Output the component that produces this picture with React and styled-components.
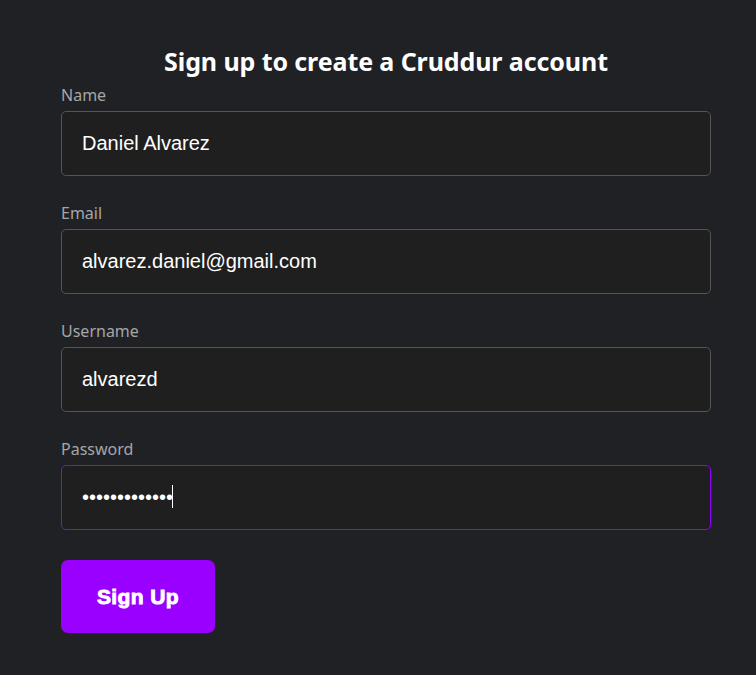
import styled, { createGlobalStyle } from "styled-components"

const GlobalStyle = createGlobalStyle`
    html, body {
        margin: 0;
        background-color: #202124;
    }
`;
const Page = styled.div`
    width: 756px;
    height: 675px;
    background-color: #202124;
    display: flex;
    padding: 44px 45px 0 61px;
    box-sizing: border-box;
`;
const Form = styled.form`
    width: 650px;
    display: flex;
    flex-direction: column;
`;
const Title = styled.h1`
    margin: 0 0 6px;
    font-family: "Noto Sans", "Open Sans", sans-serif;
    font-size: 25px;
    line-height: 34px;
    font-weight: 700;
    color: #fff;
    text-align: center;
    letter-spacing: -0.1px;
`;
const Field = styled.div`
    display: flex;
    flex-direction: column;
    gap: 5px;
    margin-bottom: 26px;
`;
const Label = styled.label`
    font-family: "Noto Sans", "Open Sans", sans-serif;
    font-size: 16px;
    line-height: 22px;
    color: #a4a6a8;
`;
const InputWrap = styled.div`
    position: relative;
    display: flex;
`;
const Input = styled.input`
    flex: 1;
    height: 65px;
    box-sizing: border-box;
    padding: 0 20px;
    background-color: #1f1f1f;
    border: 1px solid ${(p) => (p.$active ? "#9000ff" : "#545454")};
    border-radius: 5px;
    color: #fff;
    font-family: "Liberation Sans", Arial, sans-serif;
    font-size: 20px;
    outline: none;
`;
const Caret = styled.span`
    position: absolute;
    left: 111px;
    top: 20px;
    width: 1px;
    height: 23px;
    background-color: #fff;
    pointer-events: none;
`;
const Button = styled.button`
    width: 154px;
    height: 73px;
    margin-top: 4px;
    background-color: #9900ff;
    border: none;
    border-radius: 7px;
    color: #fff;
    font-family: "Liberation Sans", Arial, sans-serif;
    font-size: 21px;
    font-weight: 700;
    letter-spacing: 0.4px;
    -webkit-text-stroke: 0.9px #fff;
    cursor: pointer;
`;

const fields = [
    { label: "Name", type: "text", value: "Daniel Alvarez" },
    { label: "Email", type: "email", value: "alvarez.daniel@gmail.com" },
    { label: "Username", type: "text", value: "alvarezd" },
    { label: "Password", type: "password", value: "danielalvarez", active: true },
]

export default function App() {
    return (
        <Page>
            <GlobalStyle />
            <Form onSubmit={(e) => e.preventDefault()}>
                <Title>Sign up to create a Cruddur account</Title>
                {fields.map((f) => (
                    <Field key={f.label}>
                        <Label>{f.label}</Label>
                        <InputWrap>
                            <Input type={f.type} defaultValue={f.value} $active={f.active} />
                            {f.active && <Caret />}
                        </InputWrap>
                    </Field>
                ))}
                <Button type="submit">Sign Up</Button>
            </Form>
        </Page>
    )
}
